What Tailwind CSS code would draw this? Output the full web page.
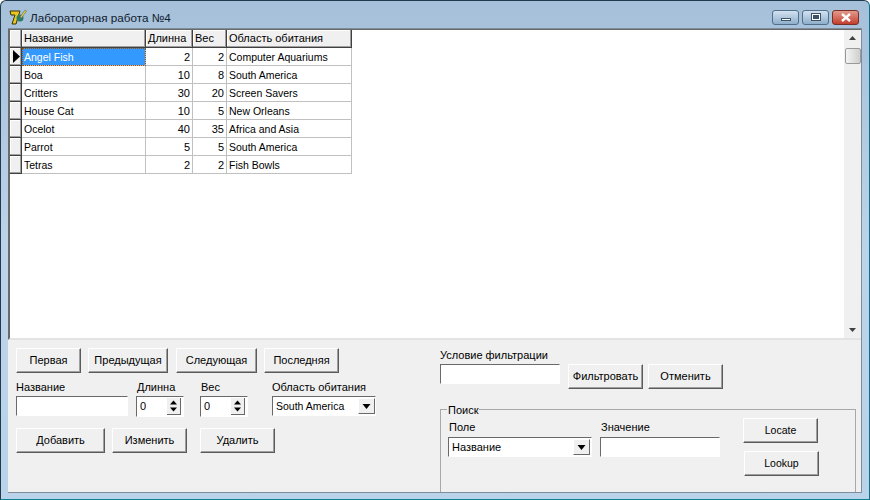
<!DOCTYPE html>
<html lang="en">
<head>
    <meta charset="UTF-8">
    <title>Лабораторная работа №4</title>
    <script src="https://cdn.jsdelivr.net/npm/@tailwindcss/browser@4"></script>
</head>
<body class="w-[870px] h-[500px] overflow-hidden font-['Liberation_Sans',sans-serif] text-[11px] leading-none text-black">
    <div class="w-[870px] h-[500px] flex flex-col border border-[#1f3a4d] rounded-t-[6px] border-b-[#0e7f8c] border-r-[#0e6f8c] pl-[7px] pr-[7px] pb-[6px] bg-gradient-to-b from-[#a6c0da] via-[#bcd4ea] to-[#b9d3ea]">

        <!-- title bar -->
        <div class="h-[27px] shrink-0 flex items-center pt-[6px]">
            <svg class="ml-[1px] w-[18px] h-[17px]" viewBox="0 0 18 17">
                <path d="M1 2h10l-1 3-3 10H3l3-9H2z" fill="#e8c820" stroke="#3a3208" stroke-width="1"/>
                <circle cx="11" cy="9" r="3.500" fill="#2c7a6a"/>
                <path d="M11 8l5-7 1.500 1-5 7z" fill="#d8d040" stroke="#555" stroke-width=".5"/>
            </svg>
            <span class="ml-[3px] text-[11.7px] text-[#10202c]">Лабораторная работа №4</span>
            <div class="ml-auto mr-[3px] mt-[-1px] flex gap-[3px]">
                <div class="w-[27px] h-[15px] flex items-end justify-center pb-[3px] rounded-[3px] border border-[#4f6f8c] bg-gradient-to-b from-[#d3e2f0] to-[#90aecb]">
                    <div class="w-[10px] h-[3px] bg-white border border-[#3c5268]"></div>
                </div>
                <div class="w-[27px] h-[15px] flex items-center justify-center rounded-[3px] border border-[#4f6f8c] bg-gradient-to-b from-[#d3e2f0] to-[#90aecb]">
                    <div class="w-[10px] h-[8px] bg-white border border-[#3c5268] p-[1px]"><div class="w-full h-full bg-[#3c5268]"></div></div>
                </div>
                <div class="w-[27px] h-[15px] flex items-center justify-center rounded-[3px] border border-[#7a2f28] bg-gradient-to-b from-[#e29a8c] to-[#c23c2c]">
                    <svg class="w-[12px] h-[9px]" viewBox="0 0 12 9"><path d="M2 1l8 7M10 1L2 8" stroke="#fff" stroke-width="2.400" fill="none"/></svg>
                </div>
            </div>
        </div>

        <!-- client area -->
        <div class="flex-1 min-h-0 flex flex-col bg-[#f0f0f0] border-t border-r border-b border-[#7f8c99]">

            <!-- db grid -->
            <div class="h-[311px] shrink-0 flex bg-white border-l-2 border-t border-b-2 border-l-[#696969] border-t-[#696969] border-b-[#e3e3e3]">
                <div class="flex-1">
                    <table class="table-fixed w-[342px] border-separate border-spacing-0">
                        <colgroup>
                            <col class="w-[12px]"><col class="w-[124px]"><col class="w-[47px]"><col class="w-[34px]"><col class="w-[125px]">
                        </colgroup>
                        <thead>
                            <tr class="h-[18px] bg-[#f0f0f0] text-left">
                                <th class="border-r border-b border-[#404040] shadow-[inset_-1px_-1px_0_#a0a0a0,inset_1px_1px_0_#fff]"></th>
                                <th class="font-normal pl-[2px] border-r border-b border-[#404040] shadow-[inset_-1px_-1px_0_#a0a0a0,inset_1px_1px_0_#fff]">Название</th>
                                <th class="font-normal pl-[2px] border-r border-b border-[#404040] shadow-[inset_-1px_-1px_0_#a0a0a0,inset_1px_1px_0_#fff]">Длинна</th>
                                <th class="font-normal pl-[2px] border-r border-b border-[#404040] shadow-[inset_-1px_-1px_0_#a0a0a0,inset_1px_1px_0_#fff]">Вес</th>
                                <th class="font-normal pl-[2px] border-r border-b border-[#404040] shadow-[inset_-1px_-1px_0_#a0a0a0,inset_1px_1px_0_#fff]">Область обитания</th>
                            </tr>
                        </thead>
                        <tbody class="[&_td]:pt-[1px] text-[10.5px]">
                            <tr class="h-[18px]">
                                <td class="p-0! bg-[#f0f0f0] border-r border-b border-[#404040] shadow-[inset_-1px_-1px_0_#a0a0a0,inset_1px_1px_0_#fff]"><svg class="w-[11px] h-[17px]" viewBox="0 0 11 17"><path d="M3 2l7 6.500L3 15z" fill="#000"/></svg></td>
                                <td class="pl-[2px] bg-[#3399ff] text-white outline-1 -outline-offset-1 outline-dotted outline-[#a05000] border-r border-b border-[#c0c0c0]">Angel Fish</td>
                                <td class="pr-[2px] text-right text-[11px] border-r border-b border-[#c0c0c0]">2</td>
                                <td class="pr-[2px] text-right text-[11px] border-r border-b border-[#c0c0c0]">2</td>
                                <td class="pl-[2px] border-r border-b border-[#c0c0c0]">Computer Aquariums</td>
                            </tr>
                            <tr class="h-[18px]">
                                <td class="bg-[#f0f0f0] border-r border-b border-[#404040] shadow-[inset_-1px_-1px_0_#a0a0a0,inset_1px_1px_0_#fff]"></td>
                                <td class="pl-[2px] border-r border-b border-[#c0c0c0]">Boa</td>
                                <td class="pr-[2px] text-right text-[11px] border-r border-b border-[#c0c0c0]">10</td>
                                <td class="pr-[2px] text-right text-[11px] border-r border-b border-[#c0c0c0]">8</td>
                                <td class="pl-[2px] border-r border-b border-[#c0c0c0]">South America</td>
                            </tr>
                            <tr class="h-[18px]">
                                <td class="bg-[#f0f0f0] border-r border-b border-[#404040] shadow-[inset_-1px_-1px_0_#a0a0a0,inset_1px_1px_0_#fff]"></td>
                                <td class="pl-[2px] border-r border-b border-[#c0c0c0]">Critters</td>
                                <td class="pr-[2px] text-right text-[11px] border-r border-b border-[#c0c0c0]">30</td>
                                <td class="pr-[2px] text-right text-[11px] border-r border-b border-[#c0c0c0]">20</td>
                                <td class="pl-[2px] border-r border-b border-[#c0c0c0]">Screen Savers</td>
                            </tr>
                            <tr class="h-[18px]">
                                <td class="bg-[#f0f0f0] border-r border-b border-[#404040] shadow-[inset_-1px_-1px_0_#a0a0a0,inset_1px_1px_0_#fff]"></td>
                                <td class="pl-[2px] border-r border-b border-[#c0c0c0]">House Cat</td>
                                <td class="pr-[2px] text-right text-[11px] border-r border-b border-[#c0c0c0]">10</td>
                                <td class="pr-[2px] text-right text-[11px] border-r border-b border-[#c0c0c0]">5</td>
                                <td class="pl-[2px] border-r border-b border-[#c0c0c0]">New Orleans</td>
                            </tr>
                            <tr class="h-[18px]">
                                <td class="bg-[#f0f0f0] border-r border-b border-[#404040] shadow-[inset_-1px_-1px_0_#a0a0a0,inset_1px_1px_0_#fff]"></td>
                                <td class="pl-[2px] border-r border-b border-[#c0c0c0]">Ocelot</td>
                                <td class="pr-[2px] text-right text-[11px] border-r border-b border-[#c0c0c0]">40</td>
                                <td class="pr-[2px] text-right text-[11px] border-r border-b border-[#c0c0c0]">35</td>
                                <td class="pl-[2px] border-r border-b border-[#c0c0c0]">Africa and Asia</td>
                            </tr>
                            <tr class="h-[18px]">
                                <td class="bg-[#f0f0f0] border-r border-b border-[#404040] shadow-[inset_-1px_-1px_0_#a0a0a0,inset_1px_1px_0_#fff]"></td>
                                <td class="pl-[2px] border-r border-b border-[#c0c0c0]">Parrot</td>
                                <td class="pr-[2px] text-right text-[11px] border-r border-b border-[#c0c0c0]">5</td>
                                <td class="pr-[2px] text-right text-[11px] border-r border-b border-[#c0c0c0]">5</td>
                                <td class="pl-[2px] border-r border-b border-[#c0c0c0]">South America</td>
                            </tr>
                            <tr class="h-[18px]">
                                <td class="bg-[#f0f0f0] border-r border-b border-[#404040] shadow-[inset_-1px_-1px_0_#a0a0a0,inset_1px_1px_0_#fff]"></td>
                                <td class="pl-[2px] border-r border-b border-[#c0c0c0]">Tetras</td>
                                <td class="pr-[2px] text-right text-[11px] border-r border-b border-[#c0c0c0]">2</td>
                                <td class="pr-[2px] text-right text-[11px] border-r border-b border-[#c0c0c0]">2</td>
                                <td class="pl-[2px] border-r border-b border-[#c0c0c0]">Fish Bowls</td>
                            </tr>
                        </tbody>
                    </table>
                </div>
                <!-- scrollbar -->
                <div class="w-[17px] shrink-0 flex flex-col items-center bg-[#f0f0f0]">
                    <svg class="w-[17px] h-[17px] shrink-0" viewBox="0 0 17 17"><path d="M5 10l3.500-4 3.500 4z" fill="#404040"/></svg>
                    <div class="mt-[1px] w-[16px] h-[16px] rounded-[2px] border border-[#9a9a9a] bg-gradient-to-r from-[#f4f4f4] to-[#cfcfcf]"></div>
                    <svg class="mt-auto w-[17px] h-[17px] shrink-0" viewBox="0 0 17 17"><path d="M5 7l3.500 4 3.500-4z" fill="#404040"/></svg>
                </div>
            </div>

            <!-- controls -->
            <div class="flex-1 min-h-0 flex overflow-hidden">

                <!-- left column -->
                <div class="w-[432px] shrink-0 pl-[8px] pt-[8px]">
                    <div class="flex">
                        <button class="w-[65px] h-[25px] bg-[#f0f0f0] border border-t-white border-l-white border-r-[#5a5a5a] border-b-[#5a5a5a] shadow-[inset_-1px_-1px_0_#a0a0a0]">Первая</button>
                        <button class="ml-[7px] w-[80px] h-[25px] bg-[#f0f0f0] border border-t-white border-l-white border-r-[#5a5a5a] border-b-[#5a5a5a] shadow-[inset_-1px_-1px_0_#a0a0a0]">Предыдущая</button>
                        <button class="ml-[8px] w-[81px] h-[25px] bg-[#f0f0f0] border border-t-white border-l-white border-r-[#5a5a5a] border-b-[#5a5a5a] shadow-[inset_-1px_-1px_0_#a0a0a0]">Следующая</button>
                        <button class="ml-[7px] w-[75px] h-[25px] bg-[#f0f0f0] border border-t-white border-l-white border-r-[#5a5a5a] border-b-[#5a5a5a] shadow-[inset_-1px_-1px_0_#a0a0a0]">Последняя</button>
                    </div>
                    <div class="flex mt-[9px]">
                        <div class="w-[112px]">
                            <div class="h-[14px]">Название</div>
                            <input class="w-full h-[20px] bg-white border border-t-[#696969] border-l-[#696969] border-r-white border-b-white">
                        </div>
                        <div class="ml-[8px] w-[48px]">
                            <div class="h-[14px] pl-[1px]">Длинна</div>
                            <div class="h-[21px] flex items-center pl-[3px] pr-[2px] bg-white border border-t-[#696969] border-l-[#696969] border-r-white border-b-white">
                                <span>0</span>
                                <div class="ml-auto w-[14px] h-[17px] flex flex-col bg-[#f0f0f0] border-b border-r border-[#696969]">
                                    <svg class="w-[13px] h-[8px]" viewBox="0 0 13 8"><path d="M3 6.500l3.500-4 3.500 4z"/></svg>
                                    <svg class="w-[13px] h-[8px]" viewBox="0 0 13 8"><path d="M3 1.500l3.500 4 3.500-4z"/></svg>
                                </div>
                            </div>
                        </div>
                        <div class="ml-[16px] w-[48px]">
                            <div class="h-[14px] pl-[1px]">Вес</div>
                            <div class="h-[21px] flex items-center pl-[3px] pr-[2px] bg-white border border-t-[#696969] border-l-[#696969] border-r-white border-b-white">
                                <span>0</span>
                                <div class="ml-auto w-[14px] h-[17px] flex flex-col bg-[#f0f0f0] border-b border-r border-[#696969]">
                                    <svg class="w-[13px] h-[8px]" viewBox="0 0 13 8"><path d="M3 6.500l3.500-4 3.500 4z"/></svg>
                                    <svg class="w-[13px] h-[8px]" viewBox="0 0 13 8"><path d="M3 1.500l3.500 4 3.500-4z"/></svg>
                                </div>
                            </div>
                        </div>
                        <div class="ml-[24px] w-[104px]">
                            <div class="h-[14px]">Область обитания</div>
                            <div class="h-[20px] flex items-center pl-[3px] bg-white border border-t-[#696969] border-l-[#696969] border-r-white border-b-white">
                                <span class="text-[10.5px]">South America</span>
                                <div class="ml-auto w-[17px] h-[16px] flex items-center justify-center bg-[#f0f0f0] border border-t-white border-l-white border-r-[#696969] border-b-[#696969]">
                                    <svg class="w-[9px] h-[5px]" viewBox="0 0 9 5"><path d="M.5 0h8L4.500 5z"/></svg>
                                </div>
                            </div>
                        </div>
                    </div>
                    <div class="flex mt-[11px]">
                        <button class="w-[89px] h-[25px] bg-[#f0f0f0] border border-t-white border-l-white border-r-[#5a5a5a] border-b-[#5a5a5a] shadow-[inset_-1px_-1px_0_#a0a0a0]">Добавить</button>
                        <button class="ml-[7px] w-[75px] h-[25px] bg-[#f0f0f0] border border-t-white border-l-white border-r-[#5a5a5a] border-b-[#5a5a5a] shadow-[inset_-1px_-1px_0_#a0a0a0]">Изменить</button>
                        <button class="ml-[13px] w-[75px] h-[25px] bg-[#f0f0f0] border border-t-white border-l-white border-r-[#5a5a5a] border-b-[#5a5a5a] shadow-[inset_-1px_-1px_0_#a0a0a0]">Удалить</button>
                    </div>
                </div>

                <!-- right column -->
                <div class="flex-1 min-w-0 pt-[10px]">
                    <div class="h-[14px]">Условие фильтрации</div>
                    <div class="flex">
                        <input class="w-[120px] h-[20px] bg-white border border-t-[#696969] border-l-[#696969] border-r-white border-b-white">
                        <button class="ml-[8px] w-[75px] h-[25px] bg-[#f0f0f0] border border-t-white border-l-white border-r-[#5a5a5a] border-b-[#5a5a5a] shadow-[inset_-1px_-1px_0_#a0a0a0]">Фильтровать</button>
                        <button class="ml-[5px] w-[75px] h-[25px] bg-[#f0f0f0] border border-t-white border-l-white border-r-[#5a5a5a] border-b-[#5a5a5a] shadow-[inset_-1px_-1px_0_#a0a0a0]">Отменить</button>
                    </div>
                    <!-- group box runs past the bottom edge of the form -->
                    <div class="relative mt-[20px] w-[416px] h-[120px] pl-[7px] pr-[36px] border border-[#a8a8a8]">
                        <span class="absolute left-[6px] -top-[5px] px-[1px] bg-[#f0f0f0]">Поиск</span>
                        <div class="flex">
                            <div class="w-[144px] pt-[12px]">
                                <div class="h-[15px] pl-[1px]">Поле</div>
                                <div class="h-[20px] flex items-center pl-[3px] pr-[1px] bg-white border border-t-[#696969] border-l-[#696969] border-r-white border-b-white">
                                    <span>Название</span>
                                    <div class="ml-auto w-[17px] h-[16px] flex items-center justify-center bg-[#f0f0f0] border border-t-white border-l-white border-r-[#696969] border-b-[#696969]">
                                        <svg class="w-[9px] h-[5px]" viewBox="0 0 9 5"><path d="M.5 0h8L4.500 5z"/></svg>
                                    </div>
                                </div>
                            </div>
                            <div class="ml-[8px] w-[120px] pt-[12px]">
                                <div class="h-[15px] pl-[1px]">Значение</div>
                                <input class="w-full h-[20px] bg-white border border-t-[#696969] border-l-[#696969] border-r-white border-b-white">
                            </div>
                            <div class="ml-auto pt-[8px] flex flex-col">
                                <button class="w-[75px] h-[25px] bg-[#f0f0f0] border border-t-white border-l-white border-r-[#5a5a5a] border-b-[#5a5a5a] shadow-[inset_-1px_-1px_0_#a0a0a0] text-[10.5px]">Locate</button>
                                <button class="ml-[1px] mt-[8px] w-[75px] h-[25px] bg-[#f0f0f0] border border-t-white border-l-white border-r-[#5a5a5a] border-b-[#5a5a5a] shadow-[inset_-1px_-1px_0_#a0a0a0] text-[10.5px]">Lookup</button>
                            </div>
                        </div>
                    </div>
                </div>
            </div>
        </div>
    </div>
</body>
</html>
